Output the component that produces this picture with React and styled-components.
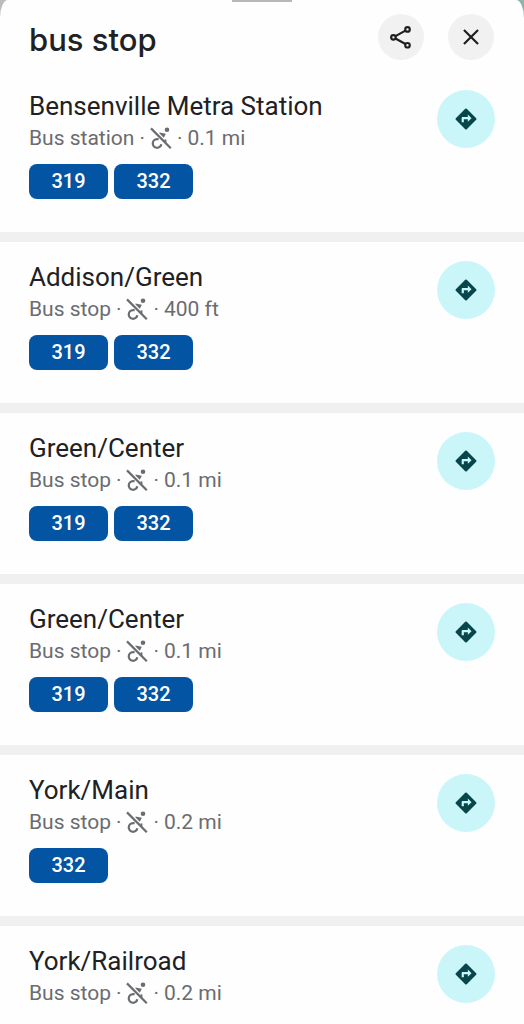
import React from "react";
import styled, { createGlobalStyle } from "styled-components";

const GlobalStyle = createGlobalStyle`
  *, *::before, *::after { box-sizing: border-box; }
  body {
    margin: 0;
    background: #fefefe;
    color: #202124;
    font-family: Roboto, "Liberation Sans", sans-serif;
  }
`;

const MapBackdrop = styled.div`
  min-height: 100vh;
  background: linear-gradient(90deg, #bcbcbc 50%, #8fb3aa 50%);
`;

const Sheet = styled.main`
  position: relative;
  min-height: 100vh;
  background: #fefefe;
  border-radius: 8px 8px 0 0 / 18px 18px 0 0;
  overflow: hidden;
`;

const Handle = styled.div`
  position: absolute;
  top: 0;
  left: 50%;
  width: 60px;
  height: 2px;
  margin-left: -30px;
  background: #b8b8b8;
`;

const Header = styled.header`
  display: flex;
  align-items: center;
  gap: 24px;
  padding: 14px 30px 11px 29px;
`;

const Heading = styled.h1`
  flex: 1;
  margin: 0;
  padding-top: 6px;
  font-family: Inter, Roboto, sans-serif;
  font-size: 31px;
  line-height: 40px;
  font-weight: 500;
`;

const RoundButton = styled.button`
  display: flex;
  flex: none;
  align-items: center;
  justify-content: center;
  width: 46px;
  height: 46px;
  padding: 0;
  border: 0;
  border-radius: 50%;
  background: #f1f1f1;
  color: #1f1f1f;
  cursor: pointer;
`;

const DirectionsButton = styled(RoundButton)`
  width: 58px;
  height: 58px;
  background: #cbf6f9;
  color: #07474b;
`;

const List = styled.ul`
  margin: 0;
  padding: 0;
  list-style: none;
`;

const Item = styled.li`
  display: flex;
  align-items: flex-start;
  justify-content: space-between;
  gap: 16px;
  padding: 19px 29px 33px 29px;

  & + & { border-top: 10px solid #f0f0f0; }
`;

const Info = styled.div`
  min-width: 0;
`;

const Name = styled.h2`
  margin: 0;
  font-size: 26px;
  line-height: 32px;
  font-weight: 400;
`;

const Meta = styled.p`
  display: flex;
  align-items: center;
  gap: 5px;
  margin: 0;
  font-size: 21px;
  line-height: 32px;
  color: #6a6c70;
`;

const Routes = styled.div`
  display: flex;
  gap: 6px;
  margin-top: 10px;
`;

const Route = styled.span`
  min-width: 79px;
  border-radius: 8px;
  background: #0454a4;
  color: #fff;
  font-size: 20px;
  line-height: 35px;
  font-weight: 500;
  text-align: center;
`;

const ShareIcon = () => (
  <svg width="26" height="26" viewBox="0 0 24 24" fill="none" stroke="currentColor" strokeWidth="2" aria-hidden="true">
    <circle cx="18" cy="5" r="2.1" />
    <circle cx="5" cy="12.3" r="2.1" />
    <circle cx="18" cy="19.6" r="2.1" />
    <path d="M6.9 11.2 16.1 6.1M6.9 13.4l9.2 5.1" />
  </svg>
);

const CloseIcon = () => (
  <svg width="26" height="26" viewBox="0 0 24 24" fill="none" stroke="currentColor" strokeWidth="2" aria-hidden="true">
    <path d="M5.5 5.5l13 13M18.5 5.5l-13 13" />
  </svg>
);

const DirectionsIcon = () => (
  <svg width="26" height="26" viewBox="0 0 24 24" fill="currentColor" aria-hidden="true">
    <path d="M21.4 11.3l-8.7-8.7a1 1 0 0 0-1.4 0l-8.7 8.7a1 1 0 0 0 0 1.4l8.7 8.7c.4.4 1 .4 1.4 0l8.7-8.7a1 1 0 0 0 0-1.4zM13.7 14.5V12.2H10V15H8v-3.8c0-.6.4-1 1-1h4.7V7.8l3.4 3.4-3.4 3.3z" />
  </svg>
);

const NotAccessibleIcon = () => (
  <svg width="22" height="24" viewBox="0 0 22 24" fill="none" stroke="currentColor" strokeWidth="2" role="img" aria-label="Not wheelchair accessible">
    <circle cx="17" cy="3.8" r="2.3" fill="currentColor" stroke="none" />
    <path d="M9.5 6.5l6.3 1.3-2 4-4.3-4.2z" fill="currentColor" stroke="none" />
    <path d="M8.6 13.2H7a4.3 4.3 0 1 0 4.3 5" strokeWidth="2.2" />
    <path d="M15.4 13.4v3.4" />
    <path d="M1 2.4l19.8 19.8" strokeWidth="2.2" />
  </svg>
);

const stops = [
  { id: 1, name: "Bensenville Metra Station", kind: "Bus station", distance: "0.1 mi", routes: ["319", "332"] },
  { id: 2, name: "Addison/Green", kind: "Bus stop", distance: "400 ft", routes: ["319", "332"] },
  { id: 3, name: "Green/Center", kind: "Bus stop", distance: "0.1 mi", routes: ["319", "332"] },
  { id: 4, name: "Green/Center", kind: "Bus stop", distance: "0.1 mi", routes: ["319", "332"] },
  { id: 5, name: "York/Main", kind: "Bus stop", distance: "0.2 mi", routes: ["332"] },
  { id: 6, name: "York/Railroad", kind: "Bus stop", distance: "0.2 mi", routes: [] },
];

function Stop({ stop }) {
  return (
    <Item>
      <Info>
        <Name>{stop.name}</Name>
        <Meta>
          <span>{stop.kind}</span>
          <span>·</span>
          <NotAccessibleIcon />
          <span>·</span>
          <span>{stop.distance}</span>
        </Meta>
        {stop.routes.length > 0 && (
          <Routes>
            {stop.routes.map((route) => (
              <Route key={route}>{route}</Route>
            ))}
          </Routes>
        )}
      </Info>
      <DirectionsButton type="button" aria-label={`Directions to ${stop.name}`}>
        <DirectionsIcon />
      </DirectionsButton>
    </Item>
  );
}

export default function App() {
  return (
    <MapBackdrop>
      <GlobalStyle />
      <Sheet>
        <Handle />
        <Header>
          <Heading>bus stop</Heading>
          <RoundButton type="button" aria-label="Share"><ShareIcon /></RoundButton>
          <RoundButton type="button" aria-label="Close"><CloseIcon /></RoundButton>
        </Header>
        <List>
          {stops.map((stop) => <Stop key={stop.id} stop={stop} />)}
        </List>
      </Sheet>
    </MapBackdrop>
  );
}
